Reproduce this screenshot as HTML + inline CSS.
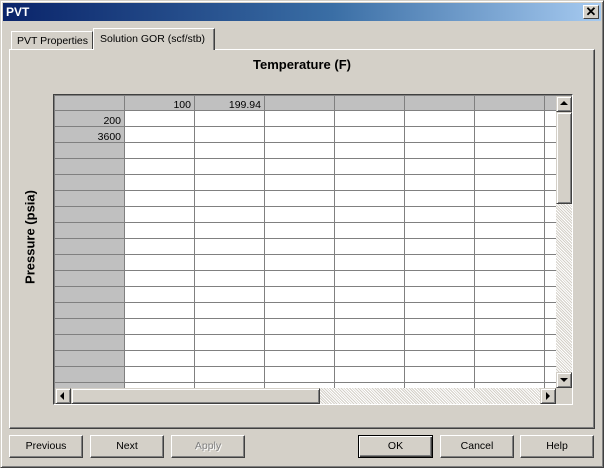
<!DOCTYPE html>
<html><head><style>
*{margin:0;padding:0;box-sizing:border-box}
body{width:604px;height:468px;background:#d4d0c8;position:relative;overflow:hidden;font-family:"Liberation Sans",Arial,sans-serif;font-size:11px;color:#000}
.abs{position:absolute}
.btn{position:absolute;top:435px;height:23px;background:#d4d0c8;border:1px solid;border-color:#fff #404040 #404040 #fff;box-shadow:inset -1px -1px 0 #808080;text-align:center;line-height:20px;font-size:10.5px}
.hatch{background-image:repeating-linear-gradient(45deg,#fff 0 1px,#d4d0c8 1px 2px);background-color:#e8e6e2}
.sb{position:absolute;background:#d4d0c8;border:1px solid;border-color:#d4d0c8 #404040 #404040 #d4d0c8;box-shadow:inset 1px 1px 0 #fff,inset -1px -1px 0 #808080}
</style></head><body>
<div class="abs" style="left:0;top:0;width:604px;height:468px;border:1px solid;border-color:#d4d0c8 #404040 #404040 #d4d0c8;box-shadow:inset 1px 1px 0 #fff,inset -1px -1px 0 #808080"></div>
<div class="abs" style="left:3px;top:3px;width:598px;height:18px;background:linear-gradient(to right,#0a246a,#3a6ea5 55%,#a6caf0);color:#fff;font-weight:bold;font-size:12px;line-height:18px;padding-left:3px">PVT</div>
<div class="abs" style="left:583px;top:5px;width:16px;height:14px;background:#d4d0c8;border:1px solid;border-color:#fff #404040 #404040 #fff;text-align:center;font-size:13px;line-height:11px;font-weight:bold">✕</div>
<div class="abs" style="left:9px;top:49px;width:586px;height:380px;border:1px solid;border-color:#fff #404040 #404040 #fff;box-shadow:inset -1px -1px 0 #808080"></div>
<div class="abs" style="left:11px;top:31px;width:82px;height:18px;border:1px solid;border-bottom:none;border-color:#fff #404040 #404040 #fff;line-height:18px;padding-left:5px;font-size:10.5px;white-space:nowrap;overflow:hidden">PVT Properties</div>
<div class="abs" style="left:93px;top:28px;width:122px;height:22px;background:#d4d0c8;border:1px solid;border-bottom:none;border-color:#fff #404040 #404040 #fff;box-shadow:inset -1px 0 0 #808080;line-height:20px;padding-left:6px;font-size:10.5px;white-space:nowrap">Solution GOR (scf/stb)</div>
<div class="abs" style="left:0;top:57px;width:604px;text-align:center;font-weight:bold;font-size:13px">Temperature (F)</div>
<div class="abs" style="left:30px;top:237px;transform:translate(-50%,-50%) rotate(-90deg);font-weight:bold;font-size:13px;white-space:nowrap">Pressure (psia)</div>
<div class="abs" style="left:53px;top:94px;width:520px;height:311px;border:1px solid;border-color:#404040 #fff #fff #404040;box-shadow:inset 1px 1px 0 #808080"></div>
<svg class="abs" style="left:55px;top:96px" width="501" height="292">
<rect x="0" y="0" width="501" height="292" fill="#fff"/>
<rect x="0" y="0" width="501" height="15" fill="#c0c0c0"/>
<rect x="0" y="0" width="69" height="292" fill="#c0c0c0"/>
<g stroke="#808080" stroke-width="1">
<line x1="69.5" y1="0" x2="69.5" y2="292"/><line x1="139.5" y1="0" x2="139.5" y2="292"/><line x1="209.5" y1="0" x2="209.5" y2="292"/><line x1="279.5" y1="0" x2="279.5" y2="292"/><line x1="349.5" y1="0" x2="349.5" y2="292"/><line x1="419.5" y1="0" x2="419.5" y2="292"/><line x1="489.5" y1="0" x2="489.5" y2="292"/>
<line x1="0" y1="14.5" x2="501" y2="14.5"/><line x1="0" y1="30.5" x2="501" y2="30.5"/><line x1="0" y1="46.5" x2="501" y2="46.5"/><line x1="0" y1="62.5" x2="501" y2="62.5"/><line x1="0" y1="78.5" x2="501" y2="78.5"/><line x1="0" y1="94.5" x2="501" y2="94.5"/><line x1="0" y1="110.5" x2="501" y2="110.5"/><line x1="0" y1="126.5" x2="501" y2="126.5"/><line x1="0" y1="142.5" x2="501" y2="142.5"/><line x1="0" y1="158.5" x2="501" y2="158.5"/><line x1="0" y1="174.5" x2="501" y2="174.5"/><line x1="0" y1="190.5" x2="501" y2="190.5"/><line x1="0" y1="206.5" x2="501" y2="206.5"/><line x1="0" y1="222.5" x2="501" y2="222.5"/><line x1="0" y1="238.5" x2="501" y2="238.5"/><line x1="0" y1="254.5" x2="501" y2="254.5"/><line x1="0" y1="270.5" x2="501" y2="270.5"/><line x1="0" y1="286.5" x2="501" y2="286.5"/>
</g>
<g font-family="Liberation Sans,Arial,sans-serif" font-size="10.5" text-anchor="end">
<text x="136" y="12">100</text><text x="206" y="12">199.94</text>
<text x="66" y="28">200</text><text x="66" y="44">3600</text>
</g>
</svg>
<div class="abs hatch" style="left:556px;top:96px;width:16px;height:292px"></div>
<div class="sb" style="left:556px;top:96px;width:16px;height:16px"></div>
<div class="abs" style="left:560px;top:101px;width:0;height:0;border-left:4px solid transparent;border-right:4px solid transparent;border-bottom:4px solid #000"></div>
<div class="sb" style="left:556px;top:112px;width:16px;height:92px"></div>
<div class="sb" style="left:556px;top:372px;width:16px;height:16px"></div>
<div class="abs" style="left:560px;top:378px;width:0;height:0;border-left:4px solid transparent;border-right:4px solid transparent;border-top:4px solid #000"></div>
<div class="abs hatch" style="left:55px;top:388px;width:501px;height:16px"></div>
<div class="sb" style="left:55px;top:388px;width:16px;height:16px"></div>
<div class="abs" style="left:60px;top:392px;width:0;height:0;border-top:4px solid transparent;border-bottom:4px solid transparent;border-right:4px solid #000"></div>
<div class="sb" style="left:71px;top:388px;width:249px;height:16px"></div>
<div class="sb" style="left:540px;top:388px;width:16px;height:16px"></div>
<div class="abs" style="left:546px;top:392px;width:0;height:0;border-top:4px solid transparent;border-bottom:4px solid transparent;border-left:4px solid #000"></div>
<div class="btn" style="left:9px;width:74px">Previous</div>
<div class="btn" style="left:90px;width:74px">Next</div>
<div class="btn" style="left:171px;width:74px;color:#808080;text-shadow:1px 1px 0 #fff">Apply</div>
<div class="btn" style="left:358px;width:75px;border:1px solid #000;box-shadow:inset 1px 1px 0 #fff,inset -1px -1px 0 #404040,inset -2px -2px 0 #808080">OK</div>
<div class="btn" style="left:440px;width:74px">Cancel</div>
<div class="btn" style="left:520px;width:74px">Help</div>
</body></html>
